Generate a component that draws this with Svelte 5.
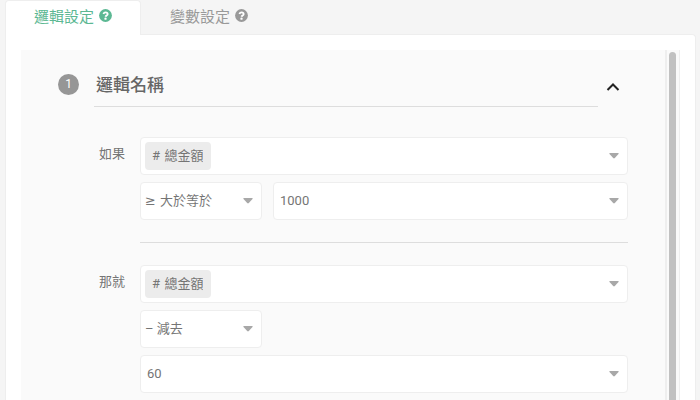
<script>
  let activeTab = $state('logic');
  let open = $state(true);
  let name = $state('邏輯名稱');

  const tabs = [
    { id: 'logic', label: '邏輯設定' },
    { id: 'variable', label: '變數設定' },
  ];
</script>

{#snippet arrow()}
  <svg class="arrow" width="10" height="6" viewBox="0 0 10 6" aria-hidden="true">
    <path d="M0.8 0H9.2Q10 0.2 9.5 1L5.8 5Q5 5.8 4.2 5L0.5 1Q0 0.2 0.8 0Z" fill="#a8a8a8" />
  </svg>
{/snippet}

{#snippet tagField(label)}
  <div class="field tag-field">
    <select class="tag" aria-label={label}>
      <option>#&emsp13;總金額</option>
    </select>
    {@render arrow()}
  </div>
{/snippet}

{#snippet selectField(label, value, kind)}
  <div class="field {kind}">
    <select aria-label={label}>
      <option>{value}</option>
    </select>
    {@render arrow()}
  </div>
{/snippet}

<div class="page">
  <div class="tabs" role="tablist">
    {#each tabs as tab}
      <button
        class="tab"
        class:active={activeTab === tab.id}
        role="tab"
        aria-selected={activeTab === tab.id}
        onclick={() => (activeTab = tab.id)}>
        {tab.label}
        <svg class="help" width="13" height="13" viewBox="0 0 512 512" aria-hidden="true">
          <circle cx="256" cy="256" r="252" fill="currentColor" />
          <path
            d="M172 198C188 158 214 136 257 136C304 136 341 163 341 204C341 250 267 259 257 303"
            fill="none"
            stroke="#fff"
            stroke-width="72" />
          <circle cx="256" cy="380" r="46" fill="#fff" />
        </svg>
      </button>
    {/each}
  </div>

  <div class="panel">
    <div class="content">
      <div class="heading">
        <span class="number">1</span>
        <input class="name" aria-label="邏輯名稱" bind:value={name} />
        <button class="toggle" aria-label="收合" aria-expanded={open} onclick={() => (open = !open)}>
          <svg class:closed={!open} width="14" height="10" viewBox="0 0 14 10" aria-hidden="true">
            <path d="M1.5 8L7 2.5L12.5 8" fill="none" stroke="#222" stroke-width="2" />
          </svg>
        </button>
      </div>

      {#if open}
        <div class="rule">
          <span class="label">如果</span>
          <div class="fields">
            {@render tagField('如果')}
            <div class="row">
              {@render selectField('條件', '≥ 大於等於', 'operator compare')}
              {@render selectField('條件值', '1000', 'value')}
            </div>
          </div>
        </div>
        <hr />
        <div class="rule">
          <span class="label">那就</span>
          <div class="fields">
            {@render tagField('那就')}
            {@render selectField('運算', '– 減去', 'operator')}
            {@render selectField('運算值', '60', 'value')}
          </div>
        </div>
      {/if}
    </div>
    <div class="scrollbar"><div class="thumb"></div></div>
  </div>
</div>

<style>
  :global(body) {
    background: #f5f5f5;
  }
  .page {
    display: flex;
    flex-direction: column;
    box-sizing: border-box;
    height: 100vh;
    padding: 0 4px 0 5px;
    overflow: hidden;
    font-family: Roboto, 'Noto Sans CJK TC', sans-serif;
    font-size: 13px;
    color: #757575;
  }
  button,
  input,
  select {
    margin: 0;
    padding: 0;
    border: none;
    background: none;
    font: inherit;
    color: inherit;
  }
  button {
    cursor: pointer;
  }
  .tabs {
    display: flex;
    height: 34px;
  }
  .tab {
    display: flex;
    align-items: center;
    gap: 5px;
    box-sizing: border-box;
    height: 35px;
    padding: 0 28px 5px;
    border: 1px solid transparent;
    border-bottom: none;
    border-radius: 4px 4px 0 0;
    font-size: 15px;
    color: #999;
  }
  .tab.active {
    position: relative;
    border-color: #eee;
    background: #fff;
    color: #5cb893;
  }
  .panel {
    display: flex;
    flex: 1;
    padding: 15px 15px 0;
    border: 1px solid #eee;
    border-bottom: none;
    border-radius: 0 4px 0 0;
    background: #fff;
  }
  .content {
    flex: 1;
    padding: 18px 37px 0;
    background: #fafafa;
  }
  .heading {
    display: flex;
    align-items: center;
    margin-bottom: 30px;
  }
  .number {
    width: 21px;
    margin: 0 15px 6px 0;
    border-radius: 50%;
    background: #969696;
    line-height: 21px;
    text-align: center;
    font-size: 12px;
    color: #fff;
  }
  .name {
    flex: 1;
    min-width: 0;
    box-sizing: border-box;
    height: 39px;
    padding: 0 2px 7px;
    border-bottom: 1px solid #ddd;
    outline: none;
    font-size: 17px;
    font-weight: 500;
    color: #666;
  }
  .toggle {
    display: flex;
    justify-content: center;
    width: 30px;
    padding-bottom: 2px;
  }
  .closed {
    transform: rotate(180deg);
  }
  .rule {
    display: flex;
  }
  .label {
    width: 41px;
    margin-left: 41px;
    line-height: 34px;
  }
  .fields {
    display: flex;
    flex: 1;
    flex-direction: column;
    gap: 7px;
  }
  .row {
    display: flex;
    gap: 11px;
  }
  .field {
    display: flex;
    align-items: center;
    position: relative;
    box-sizing: border-box;
    height: 38px;
    border: 1px solid #eee;
    border-radius: 4px;
    background: #fff;
  }
  .field select {
    flex: 1;
    height: 36px;
    padding-bottom: 2px;
    appearance: none;
    outline: none;
  }
  .arrow {
    position: absolute;
    right: 8px;
    pointer-events: none;
  }
  .operator {
    width: 122px;
  }
  .operator select {
    padding-left: 4px;
  }
  .compare select {
    font-family: 'DejaVu Sans', 'Noto Sans CJK TC', sans-serif;
  }
  .value select {
    padding-left: 6px;
  }
  .row .value {
    flex: 1;
  }
  .tag-field {
    padding-left: 4px;
  }
  .tag-field .tag {
    flex: none;
    field-sizing: content;
    height: 28px;
    padding: 0 8px 2px 7px;
    border-radius: 4px;
    background: #ececec;
  }
  hr {
    height: 1px;
    margin: 22px 0 22px 82px;
    border: none;
    background: #ddd;
  }
  .scrollbar {
    display: flex;
    box-sizing: border-box;
    width: 15px;
    padding: 2px 2px 0;
    border: solid #eee;
    border-width: 0 1px 0 2px;
    background: #fafafa;
  }
  .thumb {
    flex: 1;
    margin-right: 1px;
    border-radius: 4px 4px 0 0;
    background: #c1c1c1;
  }
</style>
